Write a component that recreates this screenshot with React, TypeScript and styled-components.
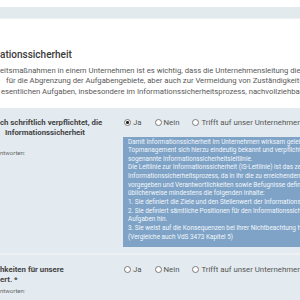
import React, { FC } from 'react';
import styled, { createGlobalStyle } from 'styled-components';

const GlobalStyle = createGlobalStyle`
  html, body {
    margin: 0;
    padding: 0;
    background: #ffffff;
  }
  body {
    font-family: Roboto, "Liberation Sans", sans-serif;
    color: #555555;
  }
`;

const Page = styled.div`
  width: 300px;
  height: 300px;
  overflow: hidden;
  display: flex;
  flex-direction: column;
`;

const TopBar = styled.div`
  margin-top: 7px;
  height: 11px;
  flex-shrink: 0;
  background: #e3eaee;
  border-bottom: 1px solid #eef2f4;
`;

const Intro = styled.section`
  padding: 29px 0 11px;
  flex-shrink: 0;
`;

const Heading = styled.h2`
  margin: 0 0 3.5px;
  font-size: 10px;
  line-height: 14px;
  font-weight: 500;
  color: #3a3a3a;
  white-space: nowrap;
`;

const Paragraph = styled.div`
  font-size: 7.7px;
  line-height: 10.5px;
  color: #585858;
  white-space: nowrap;
`;

const Line = styled.div<{ $indent?: number }>`
  padding-left: ${(p) => p.$indent ?? 0}px;
`;

const Panel = styled.section`
  flex: 1;
  background: #e4ebf0;
`;

const Question = styled.div<{ $last?: boolean }>`
  display: grid;
  grid-template-columns: 123px 1fr;
  padding: 9.5px 0 ${(p) => (p.$last ? '0' : '6px')};
  border-bottom: ${(p) => (p.$last ? 'none' : '2px solid #edf1f4')};
`;

const QuestionText = styled.div`
  font-size: 7.8px;
  line-height: 10.5px;
  font-weight: 700;
  color: #444444;
  white-space: nowrap;
`;

const Hint = styled.div<{ $gap: number }>`
  margin-top: ${(p) => p.$gap}px;
  font-size: 6px;
  line-height: 9px;
  color: #666666;
`;

const Answers = styled.div`
  min-width: 0;
`;

const RadioRow = styled.div`
  display: flex;
  align-items: center;
  gap: 12px;
  height: 10.5px;
  white-space: nowrap;
`;

const Option = styled.label`
  display: flex;
  align-items: center;
  gap: 2px;
  font-size: 7.8px;
  color: #555555;
`;

const Circle = styled.span<{ $checked?: boolean }>`
  width: 5px;
  height: 5px;
  border-radius: 50%;
  border: 0.8px solid #7a7a7a;
  background: #ffffff;
  display: flex;
  align-items: center;
  justify-content: center;
  margin-left: 1px;
  &::after {
    content: '';
    width: 2.6px;
    height: 2.6px;
    border-radius: 50%;
    background: ${(p) => (p.$checked ? '#222222' : 'transparent')};
  }
`;

const InfoBox = styled.div`
  margin-top: 9px;
  width: 240px;
  padding: 0.5px 5px 6px;
  background: #7ea3c7;
  color: #f3f7fb;
  font-size: 6.4px;
  line-height: 8.64px;
  white-space: nowrap;
`;

const infoLines = [
  'Damit Informationssicherheit im Unternehmen wirksam gelebt werden kann, muss sich das',
  'Topmanagement sich hierzu eindeutig bekannt und verpflichtet haben, etwa durch eine',
  'sogenannte Informationssicherheitsleitlinie.',
  'Die Leitlinie zur Informationssicherheit (IS-Leitlinie) ist das zentrale Dokument für den',
  'Informationssicherheitsprozess, da in ihr die zu erreichenden Ziele',
  'vorgegeben und Verantwortlichkeiten sowie Befugnisse definiert werden. Sie umfasst',
  'üblicherweise mindestens die folgenden Inhalte:',
  '1. Sie definiert die Ziele und den Stellenwert der Informationssicherheit.',
  '2. Sie definiert sämtliche Positionen für den Informationssicherheitsprozess und weist auf deren',
  'Aufgaben hin.',
  '3. Sie weist auf die Konsequenzen bei ihrer Nichtbeachtung hin.',
  '(Vergleiche auch VdS 3473 Kapitel 5)',
];

const Radios: FC<{ checked?: string }> = ({ checked }) => (
  <RadioRow>
    {['Ja', 'Nein', 'Trifft auf unser Unternehmen nicht zu'].map((label) => (
      <Option key={label}>
        <Circle $checked={checked === label} />
        {label}
      </Option>
    ))}
  </RadioRow>
);

const App: FC = () => {
  return (
    <Page>
      <GlobalStyle />
      <TopBar />
      <Intro>
        <Heading>ationssicherheit</Heading>
        <Paragraph>
          <Line>eitsmaßnahmen in einem Unternehmen ist es wichtig, dass die Unternehmensleitung die</Line>
          <Line $indent={6}>für die Abgrenzung der Aufgabengebiete, aber auch zur Vermeidung von Zuständigkeitslücken</Line>
          <Line $indent={1}>esentlichen Aufgaben, insbesondere im Informationssicherheitsprozess, nachvollziehbar</Line>
        </Paragraph>
      </Intro>
      <Panel>
        <Question>
          <div>
            <QuestionText>
              <Line>ch schriftlich verpflichtet, die</Line>
              <Line $indent={5}>Informationssicherheit</Line>
            </QuestionText>
            <Hint $gap={9.5}>ntworten:</Hint>
          </div>
          <Answers>
            <Radios checked="Ja" />
            <InfoBox>
              {infoLines.map((line) => (
                <div key={line}>{line}</div>
              ))}
            </InfoBox>
          </Answers>
        </Question>
        <Question $last>
          <div>
            <QuestionText>
              <Line>hkeiten für unsere</Line>
              <Line>ert. *</Line>
            </QuestionText>
            <Hint $gap={0}>ntworten:</Hint>
          </div>
          <Answers>
            <Radios />
          </Answers>
        </Question>
      </Panel>
    </Page>
  );
};

export default App;
